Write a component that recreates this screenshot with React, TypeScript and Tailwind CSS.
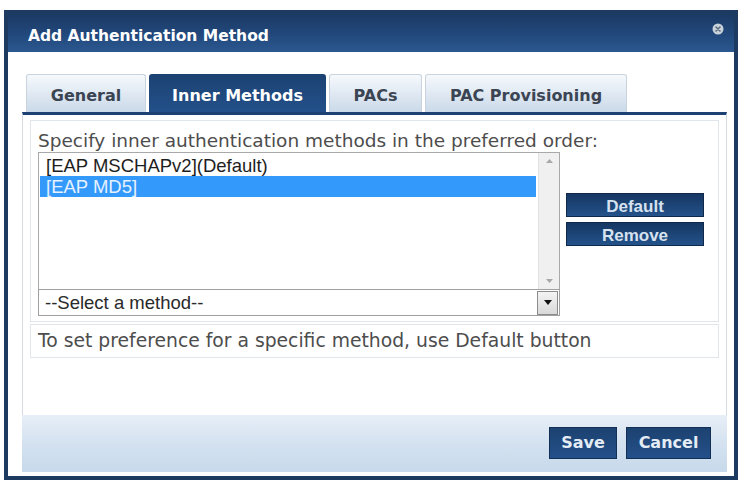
import { useState } from "react";

const tabs = ["General", "Inner Methods", "PACs", "PAC Provisioning"];
const tabWidths: Record<string, string> = {
  General: "w-[120px]",
  "Inner Methods": "w-[177px]",
  PACs: "w-[93px]",
  "PAC Provisioning": "w-[202px]",
};

const methods = ["[EAP MSCHAPv2](Default)", "[EAP MD5]"];

function CloseIcon() {
  return (
    <svg width="12" height="12" viewBox="0 0 12 12">
      <circle cx="6" cy="6" r="5.5" fill="#c9d1db" />
      <path d="M4 4 L8 8 M8 4 L4 8" stroke="#5a6b80" strokeWidth="1.6" strokeLinecap="round" />
    </svg>
  );
}

function MethodList({ selected, onSelect }: { selected: number; onSelect: (i: number) => void }) {
  return (
    <div className="flex h-[138px] border border-[#a9a9a9] bg-white">
      <div className="flex-1 pt-[2px] pl-[1px] pr-[2px]">
        {methods.map((m, i) => (
          <div
            key={m}
            onClick={() => onSelect(i)}
            className={
              "h-[21px] pl-[6px] text-[18.5px] leading-[21px] cursor-default " +
              (i === selected ? "bg-[#3399fb] text-[#e6f1ff]" : "text-[#1e1e1e]")
            }
          >
            {m}
          </div>
        ))}
      </div>
      {/* scrollbar track */}
      <div className="w-[21px] bg-[#f0f0f0] border-l border-[#e2e2e2] flex flex-col items-center justify-between py-[6px]">
        <svg width="7" height="4" viewBox="0 0 7 4">
          <path d="M0 4 L3.5 0 L7 4 Z" fill="#a8a8a8" />
        </svg>
        <svg width="7" height="4" viewBox="0 0 7 4">
          <path d="M0 0 L3.5 4 L7 0 Z" fill="#a8a8a8" />
        </svg>
      </div>
    </div>
  );
}

function MethodSelect() {
  return (
    <div className="-mt-px flex h-[27px] items-center border border-[#a0a0a0] bg-white">
      <span className="flex-1 pl-[6px] text-[18.5px] text-[#2a2a2a]">--Select a method--</span>
      <div className="mr-px flex h-[24px] w-[21px] items-center justify-center border border-[#8c8c8c] bg-gradient-to-b from-[#f4f4f4] to-[#d9d9d9]">
        <svg width="8" height="5" viewBox="0 0 8 5">
          <path d="M0 0 L4 5 L8 0 Z" fill="#111" />
        </svg>
      </div>
    </div>
  );
}

export default function App() {
  const [activeTab, setActiveTab] = useState("Inner Methods");
  const [selected, setSelected] = useState(1);

  return (
    <div className="min-h-screen bg-white pt-[10px] pl-[4px]">
      <div className="flex h-[470px] w-[734px] flex-col border-4 border-[#1d3a61] bg-white font-['DejaVu_Sans',sans-serif]">
        {/* title bar */}
        <div className="flex h-[38px] justify-between bg-gradient-to-b from-[#1b3a64] via-[#21477a] to-[#2b5890] pl-[20px] pr-[10px]">
          <span className="pt-[11px] text-[15.5px] font-bold text-white">Add Authentication Method</span>
          <div className="pt-[9px]">
            <CloseIcon />
          </div>
        </div>

        <div className="flex flex-1 flex-col pl-[14px] pr-[7px] pt-[22px] pb-[4px]">
          {/* tabs */}
          <div className="flex h-[38px] items-end gap-[3px] pl-[4px]">
            {tabs.map((t) => {
              const active = t === activeTab;
              return (
                <button
                  key={t}
                  onClick={() => setActiveTab(t)}
                  className={
                    "h-[38px] rounded-t-[3px] pt-[5px] text-[16px] font-bold " +
                    tabWidths[t] +
                    (active
                      ? " bg-gradient-to-b from-[#1c4272] to-[#23508a] text-white"
                      : " border border-b-0 border-[#c9d3de] bg-gradient-to-b from-[#f6f9fc] to-[#cad9e9] text-[#3b4452]")
                  }
                >
                  {t}
                </button>
              );
            })}
          </div>

          {/* tab panel */}
          <div className="flex h-[303px] flex-col gap-[2px] border-x border-t-[3px] border-x-[#d3dbe4] border-t-[#1d4172] px-[7px] pt-[5px]">
            <div className="h-[202px] border border-[#e0e6ec] pl-[7px] pt-[8px]">
              <p className="text-[18.5px] leading-[23px] whitespace-nowrap text-[#4d4d4d]">
                Specify inner authentication methods in the preferred order:
              </p>
              <div className="flex gap-[6px] font-['Liberation_Sans',Arial,sans-serif]">
                <div className="w-[522px]">
                  <MethodList selected={selected} onSelect={setSelected} />
                  <MethodSelect />
                </div>
                <div className="mt-[41px] flex w-[138px] flex-col gap-[5px]">
                  <button className="h-[24px] border border-[#10294a] bg-gradient-to-b from-[#163763] to-[#23528a] text-[17px] font-bold text-[#d6e2ef]">
                    Default
                  </button>
                  <button className="h-[24px] border border-[#10294a] bg-gradient-to-b from-[#163763] to-[#23528a] text-[17px] font-bold text-[#d6e2ef]">
                    Remove
                  </button>
                </div>
              </div>
            </div>
            <div className="flex h-[34px] items-center border border-[#e0e6ec] pl-[7px]">
              <span className="text-[18.75px] whitespace-nowrap text-[#4d4d4d]">
                To set preference for a specific method, use Default button
              </span>
            </div>
          </div>

          {/* footer */}
          <div className="flex h-[57px] items-start justify-end gap-[9px] bg-gradient-to-b from-[#e7eef7] via-[#d4e2f0] to-[#c7d9eb] pr-[16px] pt-[12px]">
            <button className="h-[32px] w-[68px] border border-[#122f55] bg-gradient-to-b from-[#1c4270] to-[#24508a] text-[16px] font-bold text-[#e4ecf5]">
              Save
            </button>
            <button className="h-[32px] w-[85px] border border-[#122f55] bg-gradient-to-b from-[#1c4270] to-[#24508a] text-[16px] font-bold text-[#e4ecf5]">
              Cancel
            </button>
          </div>
        </div>
      </div>
    </div>
  );
}
